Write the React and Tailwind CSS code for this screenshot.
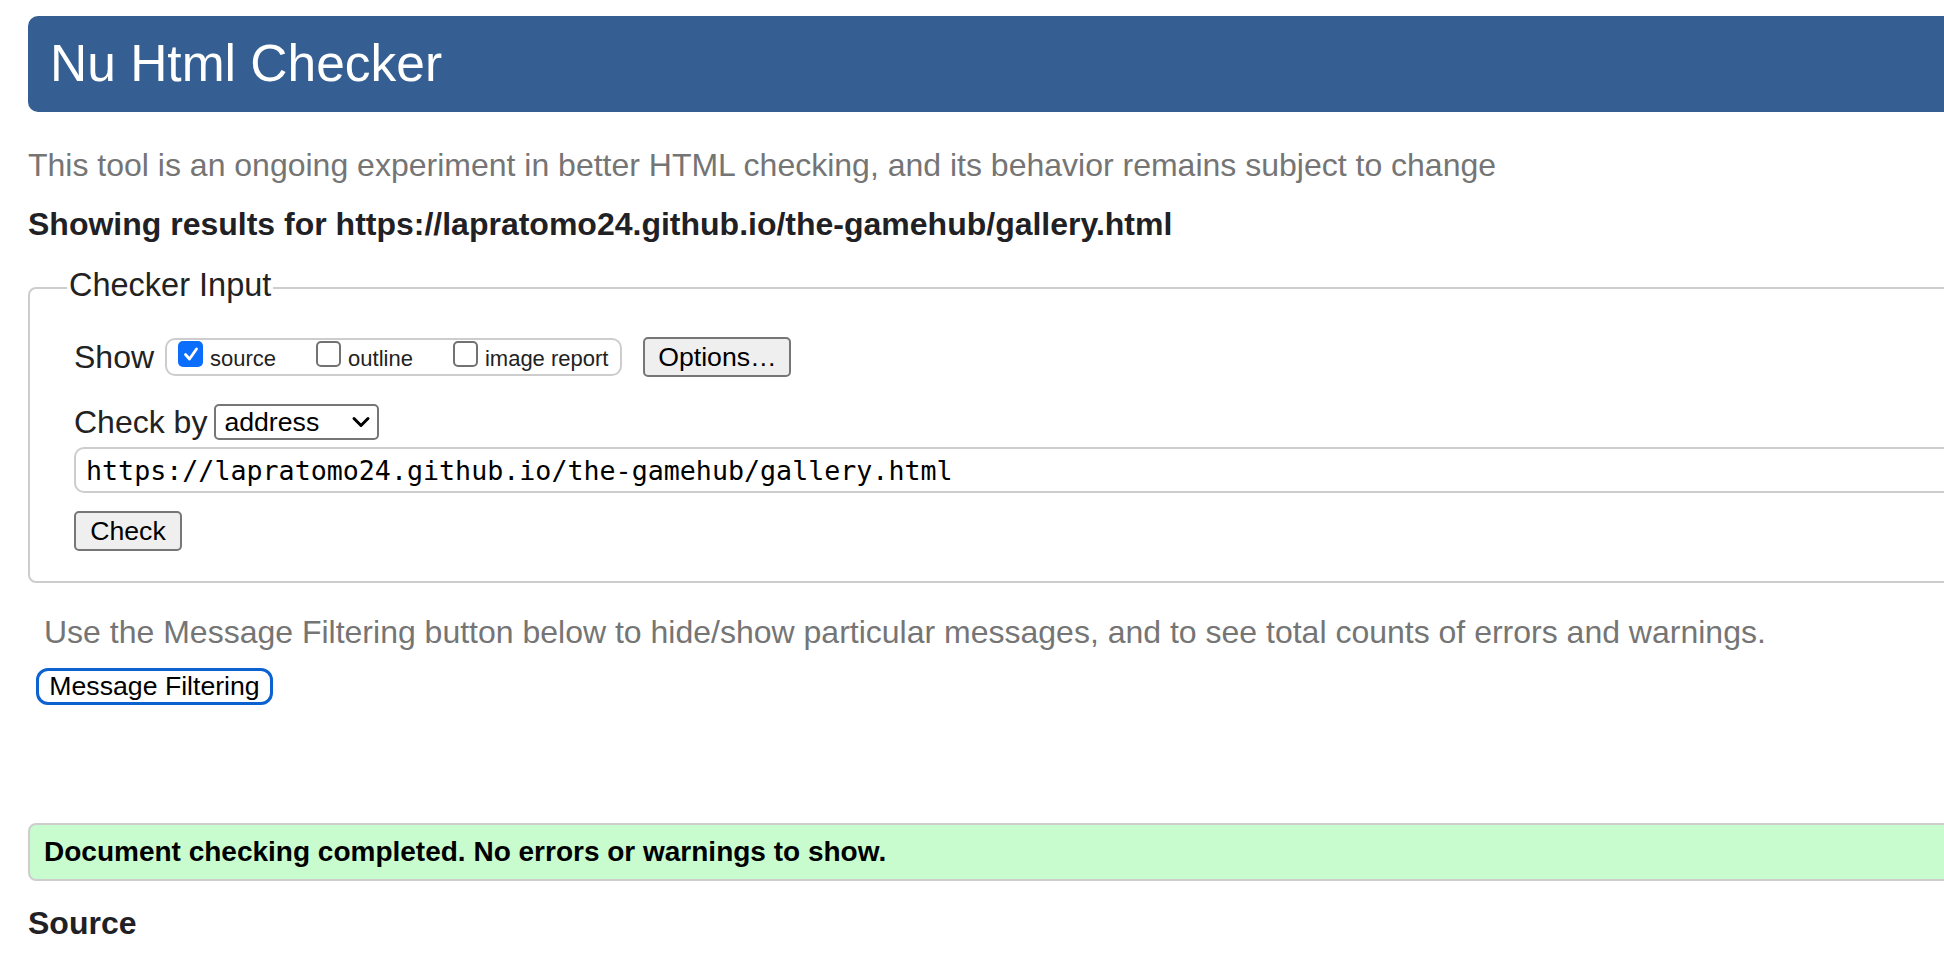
import React from 'react';

const sans = "font-['Liberation_Sans',Arial,sans-serif]";

function Checkbox({ checked }) {
  if (checked) {
    return (
      <span className="w-[25px] h-[26px] shrink-0 rounded-[5px] bg-[#0b6dfc] flex items-center justify-center">
        <svg width="20" height="20" viewBox="0 0 20 20" fill="none">
          <path d="M4.5 10.5l4 4.5 7-10" stroke="white" strokeWidth="2.8" strokeLinecap="round" strokeLinejoin="round" />
        </svg>
      </span>
    );
  }
  return <span className="w-[25px] h-[26px] shrink-0 rounded-[5px] border-2 border-[#727272] bg-white" />;
}

function ShowOption({ label, checked }) {
  return (
    <label className="flex items-start gap-[7px]">
      <Checkbox checked={checked} />
      <span className="mt-[5px] text-[22px] leading-[26px] text-[#222]">{label}</span>
    </label>
  );
}

export default function App() {
  return (
    <div className={`w-full min-h-[974px] bg-white overflow-hidden ${sans}`}>
      <div className="w-[calc(100%+40px)] pl-[28px] pb-10">
        {/* Header */}
        <h1 className="mt-[16px] h-[96px] bg-[#355e93] rounded-l-[10px] flex items-center pl-[22px] text-white text-[51.5px] leading-none font-normal">
          Nu Html Checker
        </h1>

        <p className="mt-[33px] text-[32px] leading-[40px] text-[#757575]">
          This tool is an ongoing experiment in better HTML checking, and its behavior remains subject to change
        </p>
        <p className="mt-[19px] text-[32px] leading-[40px] font-bold text-[#1f2125]">
          Showing results for https://lapratomo24.github.io/the-gamehub/gallery.html
        </p>

        {/* Checker Input */}
        <fieldset className="mt-[21px] border-2 border-[#cdcdcd] rounded-[8px] pl-[44px] pt-[26px] pb-[30px]">
          <legend className="-ml-[7px] px-[2px] pb-[6px] text-[32.5px] leading-[40px] text-[#222]">Checker Input</legend>

          <div className="flex items-center h-[40px]">
            <span className="text-[32px] leading-[40px] text-[#222]">Show</span>
            <div className="ml-[11px] h-[38px] border-2 border-[#cdcdcd] rounded-[10px] pl-[11px] pr-[12px] pt-[1px] flex items-start gap-[40px]">
              <ShowOption label="source" checked />
              <ShowOption label="outline" />
              <ShowOption label="image report" />
            </div>
            <button className="ml-[21px] w-[148px] h-[40px] bg-[#efefef] border-2 border-[#767676] rounded-[5px] text-[26.67px] leading-none text-black">
              Options…
            </button>
          </div>

          <div className="mt-[25px] flex items-center h-[40px]">
            <span className="text-[32px] leading-[40px] text-[#222]">Check by</span>
            <div className="ml-[7px] w-[165px] h-[36px] border-2 border-[#767676] rounded-[5px] flex items-center justify-between pl-[8px] pr-[6px]">
              <span className="text-[26.67px] leading-none text-black">address</span>
              <svg width="20" height="14" viewBox="0 0 20 14" fill="none">
                <path d="M3 3.5l7 7 7-7" stroke="black" strokeWidth="3" strokeLinecap="round" strokeLinejoin="round" />
              </svg>
            </div>
          </div>

          <input
            readOnly
            value="https://lapratomo24.github.io/the-gamehub/gallery.html"
            className="mt-[5px] block w-full h-[46px] border-2 border-[#cdcdcd] rounded-[10px] pl-[10px] text-[26.67px] text-black font-['DejaVu_Sans_Mono',Menlo,monospace] outline-none"
          />

          <button className="mt-[18px] block w-[108px] h-[40px] bg-[#efefef] border-2 border-[#767676] rounded-[5px] text-[26.67px] leading-none text-black">
            Check
          </button>
        </fieldset>

        <p className="mt-[29px] pl-[16px] text-[32px] leading-[40px] text-[#757575]">
          Use the Message Filtering button below to hide/show particular messages, and to see total counts of errors and warnings.
        </p>
        <button className="mt-[16px] ml-[8px] block w-[237px] h-[37px] bg-white border-[3px] border-[#0c62d0] rounded-[12px] text-[26.67px] leading-none text-black">
          Message Filtering
        </button>

        {/* Result */}
        <div className="mt-[118px] h-[58px] border-2 border-[#cdcdcd] rounded-[8px] bg-[#c8fccf] pl-[14px] flex items-center">
          <span className="text-[28px] leading-[36px] font-bold text-black">
            Document checking completed. No errors or warnings to show.
          </span>
        </div>

        <h2 className="mt-[22px] text-[32px] leading-[40px] font-bold text-[#1f2125]">Source</h2>
      </div>
    </div>
  );
}
